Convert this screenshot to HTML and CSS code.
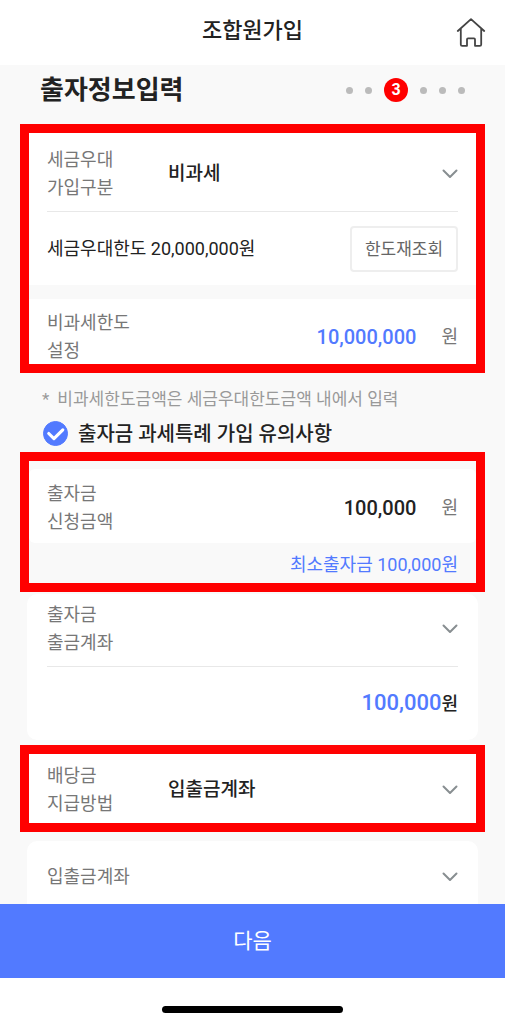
FILE: index.html
```html
<!DOCTYPE html>
<html lang="ko">
<head>
<meta charset="utf-8">
<meta name="viewport" content="width=device-width, initial-scale=1">
<title>조합원가입</title>
<link rel="stylesheet" href="styles.css">
</head>
<body>
<header class="topbar">
  <h1 class="topbar-title">조합원가입</h1>
  <a class="home" href="#" aria-label="홈">
    <svg width="30" height="30" viewBox="0 0 30 30" fill="none" stroke="#444" stroke-width="1.8" stroke-linejoin="round" stroke-linecap="round"><path d="M1.8 13 15 1.2 28.2 13M4.8 10.8V26.4Q4.8 27.8 6.2 27.8H11V21.4Q11 20.4 12 20.4H18Q19 20.4 19 21.4V27.8H23.8Q25.2 27.8 25.2 26.4V10.8"/></svg>
  </a>
</header>

<main class="content">
  <div class="step-head">
    <h2 class="step-title">출자정보입력</h2>
    <ol class="steps" aria-label="진행 단계">
      <li class="dot"></li><li class="dot"></li><li class="current">3</li><li class="dot"></li><li class="dot"></li><li class="dot"></li>
    </ol>
  </div>

  <section class="frame frame-limit">
    <div class="card">
      <div class="row row-select">
        <label class="label" for="tax-type">세금우대<br>가입구분</label>
        <div class="picker">
          <select id="tax-type" class="select"><option>비과세</option></select>
          <svg class="chevron" viewBox="0 0 16 10"><path d="M1.5 1.5 8 8 14.5 1.5"/></svg>
        </div>
      </div>
      <div class="row row-limit">
        <p class="limit">세금우대한도 20,000,000원</p>
        <button class="requery" type="button">한도재조회</button>
      </div>
    </div>
    <div class="card">
      <div class="row row-amount">
        <label class="label" for="free-limit">비과세한도<br>설정</label>
        <input id="free-limit" class="amount blue" type="text" inputmode="numeric" value="10,000,000">
        <span class="unit">원</span>
      </div>
    </div>
  </section>

  <p class="note"><span>*</span><span>비과세한도금액은 세금우대한도금액 내에서 입력</span></p>
  <label class="agree">
    <span class="tick">
      <input class="tick-input" type="checkbox" checked>
      <svg class="tick-mark" viewBox="0 0 24 24"><path d="M5.5 12 10.5 17 19 8.5"/></svg>
    </span>
    <span>출자금 과세특례 가입 유의사항</span>
  </label>

  <section class="frame frame-invest">
    <div class="card card-round">
      <div class="row row-amount">
        <label class="label" for="invest">출자금<br>신청금액</label>
        <input id="invest" class="amount" type="text" inputmode="numeric" value="100,000">
        <span class="unit">원</span>
      </div>
    </div>
    <p class="minimum">최소출자금 100,000원</p>
  </section>

  <section class="card card-wide">
    <div class="row row-select">
      <label class="label" for="withdraw">출자금<br>출금계좌</label>
      <div class="picker">
        <select id="withdraw" class="select"><option></option></select>
        <svg class="chevron" viewBox="0 0 16 10"><path d="M1.5 1.5 8 8 14.5 1.5"/></svg>
      </div>
    </div>
    <p class="total"><span class="total-num">100,000</span>원</p>
  </section>

  <section class="frame frame-payout">
    <div class="card row row-payout">
      <label class="label" for="payout">배당금<br>지급방법</label>
      <div class="picker">
        <select id="payout" class="select"><option>입출금계좌</option></select>
        <svg class="chevron" viewBox="0 0 16 10"><path d="M1.5 1.5 8 8 14.5 1.5"/></svg>
      </div>
    </div>
  </section>

  <section class="card card-wide">
    <div class="row row-account">
      <label class="label" for="account">입출금계좌</label>
      <div class="picker">
        <select id="account" class="select"><option></option></select>
        <svg class="chevron" viewBox="0 0 16 10"><path d="M1.5 1.5 8 8 14.5 1.5"/></svg>
      </div>
    </div>
  </section>
</main>

<footer class="bottom">
  <button class="next" type="button">다음</button>
  <div class="home-indicator"></div>
</footer>
</body>
</html>
```
FILE: styles.css
```css
* { box-sizing: border-box; }

body {
  margin: 0;
  height: 100vh;
  display: flex;
  flex-direction: column;
  background: #fff;
  color: #222;
  font-family: Roboto, "Noto Sans CJK KR", sans-serif;
  font-size: 18px;
  line-height: 28px;
}

h1, h2, p, ol { margin: 0; padding: 0; }
button, input, select { font: inherit; color: inherit; margin: 0; }

.topbar {
  flex: none;
  display: grid;
  grid-template-columns: 1fr auto 1fr;
  align-items: center;
  height: 65px;
  padding: 0 19px;
}
.topbar-title {
  grid-column: 2;
  padding-bottom: 3px;
  font-size: 22px;
  font-weight: 500;
}
.home { justify-self: end; display: flex; }

.content {
  flex: 1;
  min-height: 0;
  overflow-y: auto;
  scrollbar-width: none;
  background: #f9f9f9;
}

.step-head {
  display: flex;
  justify-content: space-between;
  align-items: center;
  height: 50px;
  padding: 0 40px;
}
.step-title { font-size: 26px; font-weight: 700; }
.steps { display: flex; align-items: center; gap: 12px; list-style: none; }
.dot { width: 7px; height: 7px; border-radius: 50%; background: #bbb; }
.current {
  width: 24px;
  height: 24px;
  border-radius: 50%;
  background: #f00;
  color: #fff;
  font-size: 16px;
  font-weight: 700;
  line-height: 24px;
  text-align: center;
}

.frame { margin: 0 20px; border: 9px solid #f00; }
.frame-limit {
  display: grid;
  grid-template-columns: minmax(0, 1fr);
  gap: 14px;
  margin-top: 9px;
}
.frame-invest { padding-top: 8px; }
.frame-payout { margin-top: 5px; margin-bottom: 9px; }

.card { background: #fff; }
.card-round { border-radius: 6px; }
.card-wide { margin: 0 27px; border-radius: 10px; }
.frame-invest + .card-wide { margin-top: 2px; }

.row { display: flex; align-items: center; margin: 0 18px; }
.card-wide .row { margin: 0 20px; }
.label { flex: none; width: 121px; color: #777; }

.row-select { height: 79px; padding-top: 4px; border-bottom: 1px solid #e8e8e8; }
.card-wide .row-select { height: 73px; padding: 0 0 2px; }
.row-limit { height: 73px; justify-content: space-between; }
.row-amount { height: 74px; padding-top: 3px; }
.frame-limit .row-amount { height: 65px; padding-top: 10px; }
.row-payout { height: 69px; margin: 0; padding: 3px 18px 0; }
.row-account { height: 72px; }

.picker { flex: 1; min-width: 0; display: grid; align-items: center; }
.select {
  grid-area: 1 / 1;
  width: 100%;
  height: 40px;
  padding: 0;
  border: 0;
  background: transparent;
  appearance: none;
  font-size: 19px;
  font-weight: 500;
}
.chevron {
  grid-area: 1 / 1;
  justify-self: end;
  width: 16px;
  height: 10px;
  fill: none;
  stroke: #888e91;
  stroke-width: 2;
  stroke-linecap: round;
  stroke-linejoin: round;
  pointer-events: none;
}

.requery {
  width: 108px;
  height: 46px;
  border: 2px solid #eee;
  border-radius: 4px;
  padding: 0;
  background: #fff;
  color: #666;
  font-size: 17px;
}

.amount {
  flex: 1;
  min-width: 0;
  padding: 0;
  border: 0;
  background: transparent;
  font-size: 20px;
  font-weight: 500;
  text-align: right;
}
.blue { color: #527aff; }
.unit { margin-left: 25px; color: #777; }

.note {
  display: flex;
  gap: 8px;
  padding: 12px 42px 0;
  color: #999;
  font-size: 17px;
}
.agree {
  display: flex;
  align-items: center;
  gap: 10px;
  height: 39px;
  padding: 2px 43px 0;
  font-size: 20px;
  font-weight: 500;
}
.tick { display: grid; }
.tick-input {
  grid-area: 1 / 1;
  width: 25px;
  height: 25px;
  appearance: none;
  border: 1px solid #bbb;
  border-radius: 50%;
}
.tick-input:checked { border-color: #527aff; background: #527aff; }
.tick-mark {
  grid-area: 1 / 1;
  width: 25px;
  height: 25px;
  fill: none;
  stroke: #fff;
  stroke-width: 3;
  stroke-linecap: round;
  stroke-linejoin: round;
  pointer-events: none;
}

.minimum {
  height: 40px;
  padding: 8px 18px 0;
  color: #527aff;
  font-size: 18px;
  text-align: right;
}
.total { padding: 22px 20px; font-weight: 500; text-align: right; }
.total-num { color: #527aff; font-size: 22px; }

.bottom { flex: none; display: flex; flex-direction: column; align-items: center; }
.next {
  width: 100%;
  height: 74px;
  border: 0;
  background: #527aff;
  color: #fff;
  font-size: 21px;
}
.home-indicator {
  width: 36%;
  height: 7px;
  margin: 28px 0 11px;
  border-radius: 4px;
  background: #000;
}
```
